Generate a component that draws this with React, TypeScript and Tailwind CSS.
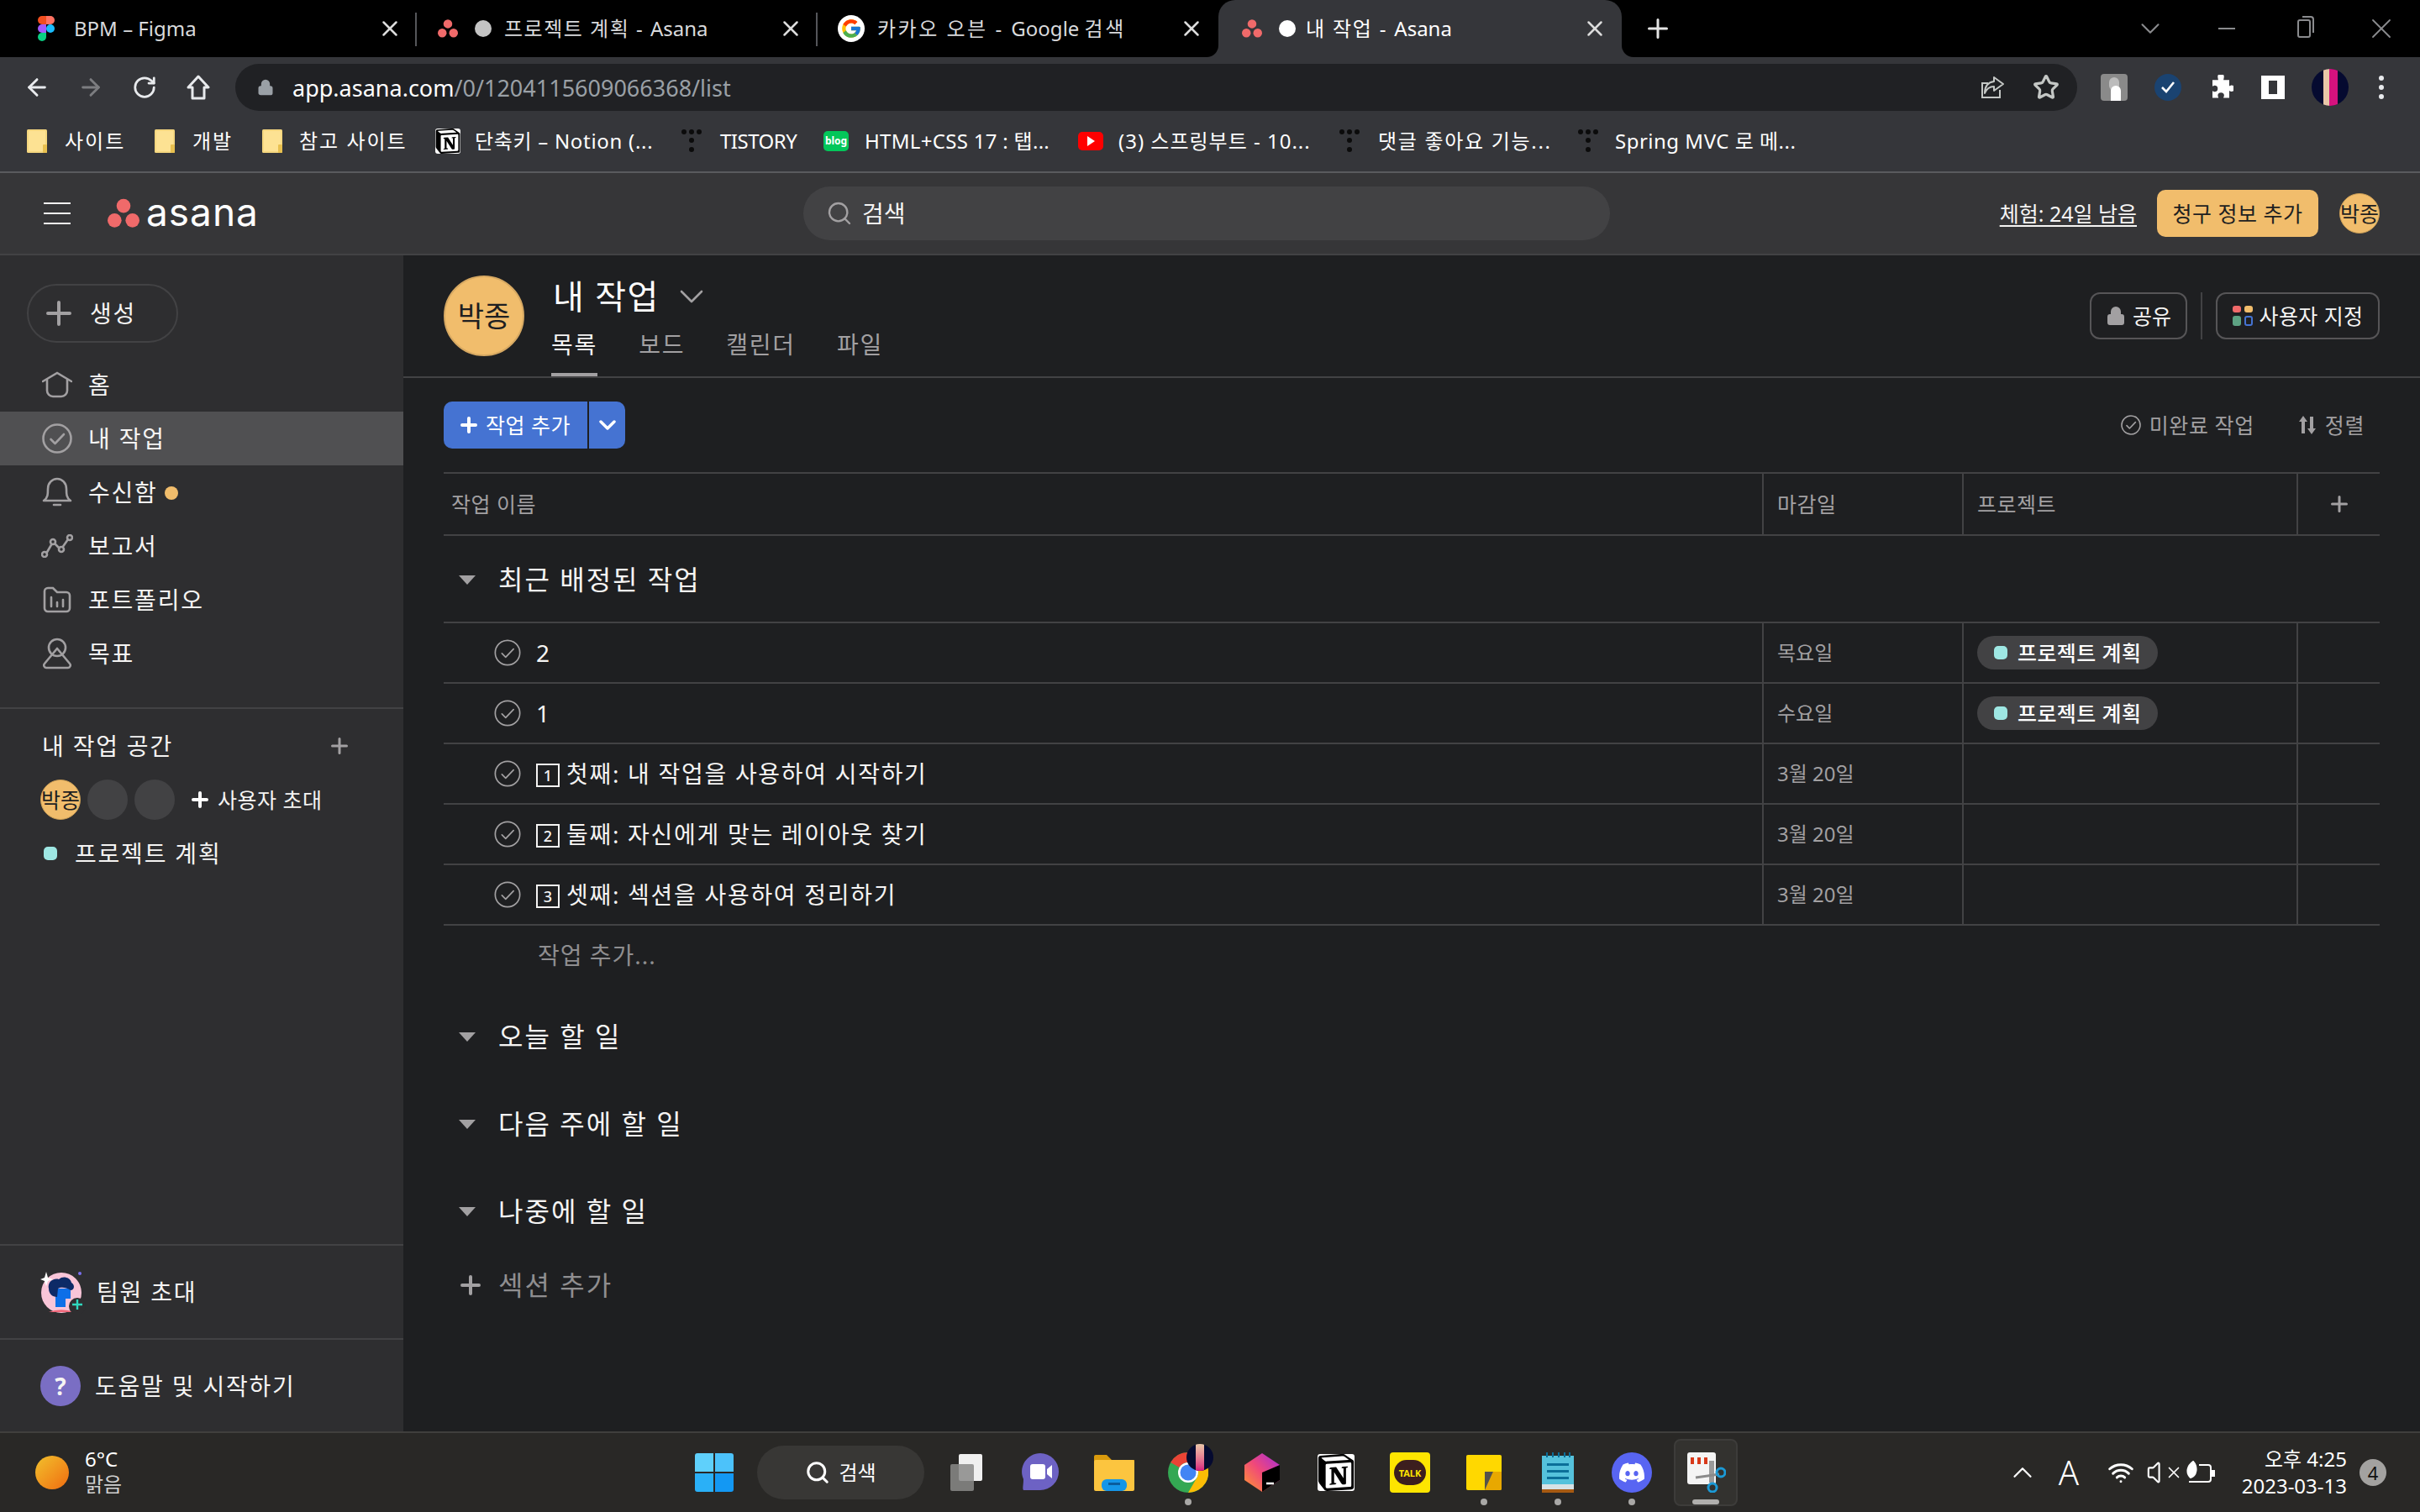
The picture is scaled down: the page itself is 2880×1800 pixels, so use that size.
import {
  ArrowLeft,
  ArrowRight,
  ChevronDown,
  ChevronUp,
  Lock,
  RotateCw,
  Search,
  Star,
  Volume,
  Wifi,
  X,
} from "lucide-react";
import { SiDiscord, SiNotion } from "react-icons/si";
import { FcGoogle } from "react-icons/fc";

const AsanaDots = ({ size = 24 }: { size?: number }) => (
  <svg width={size} height={size} viewBox="0 0 32 32">
    <circle cx="16" cy="8.5" r="7" fill="#f06a6a" />
    <circle cx="7" cy="23" r="7" fill="#f06a6a" />
    <circle cx="25" cy="23" r="7" fill="#f06a6a" />
  </svg>
);

// lucide's plus stops short of the box, this one fills it
const Cross = ({ size, stroke, color, className }: { size: number; stroke: number; color: string; className?: string }) => (
  <svg width={size} height={size} viewBox={`0 0 ${size} ${size}`} stroke={color} strokeWidth={stroke} strokeLinecap="round" className={`shrink-0 ${className ?? ""}`}>
    <path d={`M${size / 2} ${stroke / 2} V${size - stroke / 2} M${stroke / 2} ${size / 2} H${size - stroke / 2}`} />
  </svg>
);

const FigmaIcon = () => (
  <svg width="22" height="30" viewBox="0 0 22 33">
    <path d="M11 0H5.5a5.5 5.5 0 0 0 0 11H11z" fill="#f24e1e" />
    <path d="M11 0h5.5a5.5 5.5 0 0 1 0 11H11z" fill="#ff7262" />
    <path d="M11 11H5.5a5.5 5.5 0 0 0 0 11H11z" fill="#a259ff" />
    <circle cx="16.5" cy="16.5" r="5.5" fill="#1abcfe" />
    <path d="M11 22H5.5a5.5 5.5 0 1 0 5.5 5.5z" fill="#0acf83" />
  </svg>
);

const FolderIcon = () => (
  <svg width="24" height="28" viewBox="0 0 24 28">
    <rect x="0" y="0" width="24" height="28" rx="1.5" fill="#f5d77f" />
    <rect x="2" y="2" width="20" height="24" fill="#fde293" />
    <rect x="19" y="18" width="5" height="10" rx="1" fill="#e8c04f" />
  </svg>
);

const TistoryDots = () => (
  <svg width="24" height="28" viewBox="0 0 24 28" fill="#0b0b0b">
    <circle cx="3" cy="3" r="3" />
    <circle cx="12" cy="3" r="3" />
    <circle cx="21" cy="3" r="3" />
    <circle cx="12" cy="13" r="3" />
    <circle cx="12" cy="24" r="3" />
  </svg>
);

const NotionTile = ({ size }: { size: number }) => (
  <div className="flex items-center justify-center rounded-[3px] bg-white" style={{ width: size, height: size }}>
    <SiNotion size={size} color="#000000" />
  </div>
);

const Tab = ({
  width,
  icon,
  children,
  active,
  divider,
}: {
  width: string;
  icon: React.ReactNode;
  children: React.ReactNode;
  active?: boolean;
  divider?: boolean;
}) => (
  <div className={`${width} relative flex h-[68px] shrink-0 items-center ${active ? "rounded-t-[20px] bg-[#35363a]" : ""}`}>
    {active && (
      <>
        <div className="absolute -left-[14px] bottom-0 h-[14px] w-[14px] overflow-hidden">
          <div className="h-[14px] w-[14px] rounded-br-[14px] shadow-[6px_6px_0_6px_#35363a]" />
        </div>
        <div className="absolute -right-[14px] bottom-0 h-[14px] w-[14px] overflow-hidden">
          <div className="h-[14px] w-[14px] rounded-bl-[14px] shadow-[-6px_6px_0_6px_#35363a]" />
        </div>
      </>
    )}
    {icon}
    <span className={`whitespace-pre text-[24px] leading-none ${active ? "text-white" : "text-[#d9dadc]"}`}>{children}</span>
    <X size={30} strokeWidth={2} className="absolute right-[17px] top-[19px] text-[#dcdcdc]" />
    {divider && <div className="absolute right-0 top-[15px] h-[40px] w-[2px] bg-[#55565a]" />}
  </div>
);

const TabStrip = () => (
  <div className="flex h-[68px] shrink-0 items-center bg-black">
    <Tab
      width="w-[496px]"
      divider
      icon={
        <div className="ml-[44px] mr-[22px]">
          <FigmaIcon />
        </div>
      }
    >
      BPM – Figma
    </Tab>
    <Tab
      width="w-[477px]"
      divider
      icon={
        <div className="ml-[25px] mr-[15px] flex items-center gap-[20px]">
          <AsanaDots />
          <span className="h-[20px] w-[20px] rounded-full bg-[#c4c4c4]" />
        </div>
      }
    >
      <span className="tracking-[1.5px]">{"프로젝트 계획 - "}</span>Asana
    </Tab>
    <Tab
      width="w-[477px]"
      icon={
        <div className="ml-[24px] mr-[15px] flex h-[32px] w-[32px] items-center justify-center rounded-full bg-white">
          <FcGoogle size={26} />
        </div>
      }
    >
      <span className="tracking-[2.5px]">{"카카오 오븐 - "}</span>Google <span className="tracking-[2.5px]">검색</span>
    </Tab>
    <Tab
      width="w-[480px]"
      active
      icon={
        <div className="ml-[28px] mr-[12px] flex items-center gap-[20px]">
          <AsanaDots />
          <span className="h-[20px] w-[20px] rounded-full bg-white" />
        </div>
      }
    >
      <span className="tracking-[1.8px]">{"내 작업 - "}</span>Asana
    </Tab>
    <Cross size={24} stroke={3} color="#e4e4e4" className="ml-[31px]" />
    <div className="ml-auto flex items-center text-[#8a8b8e]">
      <ChevronDown size={38} strokeWidth={1.3} className="mr-[62px]" />
      <div className="mr-[74px] h-[2px] w-[20px] bg-[#8a8b8e]" />
      <div className="relative mr-[64px] h-[22px] w-[16px] rounded-[3px] border-2 border-[#8a8b8e]">
        <div className="absolute -right-[6px] -top-[6px] h-[20px] w-[14px] rounded-tr-[4px] border-r-2 border-t-2 border-[#8a8b8e]" />
      </div>
      <X size={40} strokeWidth={1.1} className="mr-[26px]" />
    </div>
  </div>
);

const Toolbar = () => (
  <div className="flex h-[64px] shrink-0 items-end bg-[#35363a] pb-0">
    <div className="flex h-[56px] w-[280px] items-center">
      <ArrowLeft size={32} strokeWidth={2.2} className="ml-[28px] text-[#e8eaed]" />
      <ArrowRight size={32} strokeWidth={2.2} className="ml-[32px] text-[#7c7d80]" />
      <RotateCw size={30} strokeWidth={2.2} className="ml-[33px] text-[#e8eaed]" />
      <svg width="28" height="30" viewBox="0 0 28 30" className="ml-[35px]" fill="none" stroke="#e8eaed" strokeWidth="3">
        <path d="M14 2 L26 15 H21 V28 H7 V15 H2 Z" strokeLinejoin="round" />
      </svg>
    </div>
    <div className="flex h-[56px] w-[2192px] items-center rounded-full bg-[#202124]">
      <Lock size={20} fill="#9aa0a6" strokeWidth={2.4} className="ml-[26px] text-[#9aa0a6]" />
      <span className="ml-[22px] text-[27px] leading-none text-white">
        app.asana.com<span className="text-[#9aa0a6]">/0/1204115609066368/list</span>
      </span>
      <svg width="30" height="30" viewBox="0 0 30 30" fill="none" stroke="#c4c7c5" strokeWidth="2" className="ml-auto">
        <path d="M24 18 v9 H3 V10 h7" />
        <path d="M17 3 L28 11 L17 19 V14 C11 14 8 17 6 22 C6 14 10 9 17 8 Z" strokeLinejoin="round" />
      </svg>
      <Star size={32} strokeWidth={2.4} className="ml-[33px] mr-[21px] text-[#c4c7c5]" />
    </div>
    <div className="flex h-[56px] items-center">
      <div className="relative ml-[28px] h-[32px] w-[32px] rounded-[4px] bg-[#8a8a8a]">
        <div className="absolute left-[10px] top-[4px] h-[16px] w-[12px] rounded-full bg-[#bcbcbc]" />
        <div className="absolute bottom-0 left-[12px] h-[18px] w-[12px] rounded-t-[6px] bg-white" />
      </div>
      <div className="ml-[32px] flex h-[32px] w-[32px] items-center justify-center rounded-full bg-[#1a4371]">
        <svg width="18" height="16" viewBox="0 0 18 16" fill="none" stroke="white" strokeWidth="2.6">
          <path d="M2 8 L7 13 L16 2" />
        </svg>
      </div>
      <svg width="30" height="30" viewBox="0 0 24 24" fill="white" className="ml-[32px]">
        <path d="M9 2a3 3 0 0 1 6 0c0 1-.5 2-.5 3H20v5.5c1 0 1.4-.6 2-.6a3 3 0 0 1 0 6c-.6 0-1-.6-2-.6V22h-5.5c0-1 .6-1.4.6-2a3 3 0 0 0-6 0c0 .6.6 1 .6 2H4v-6.5c1 0 1.4.6 2 .6a3 3 0 0 0 0-6c-.6 0-1 .6-2 .6V5h5.5C9.500 4 9 3 9 2z" />
      </svg>
      <div className="ml-[33px] flex h-[28px] w-[28px] justify-center bg-white">
        <div className="mt-[6px] h-[16px] w-[10px] bg-[#35363a]" />
      </div>
      <div className="relative ml-[32px] flex h-[44px] w-[44px] justify-center overflow-hidden rounded-full bg-[#050a30]">
        <div className="h-[44px] w-[7px] bg-[#e9c7a8]" />
        <div className="h-[44px] w-[10px] bg-[#d6127e]" />
      </div>
      <div className="ml-[36px] flex flex-col gap-[5px]">
        <span className="h-[6px] w-[6px] rounded-full bg-[#e8eaed]" />
        <span className="h-[6px] w-[6px] rounded-full bg-[#e8eaed]" />
        <span className="h-[6px] w-[6px] rounded-full bg-[#e8eaed]" />
      </div>
    </div>
  </div>
);

const Bookmark = ({ icon, label, className, text }: { icon: React.ReactNode; label: string; className: string; text: string }) => (
  <div className={`flex shrink-0 items-center ${className}`}>
    {icon}
    <span className={`whitespace-nowrap text-[24px] leading-none text-white ${text}`}>{label}</span>
  </div>
);

const Bookmarks = () => (
  <div className="flex h-[74px] shrink-0 items-center border-b-2 border-[#5a5b5e] bg-[#35363a] pl-[32px]">
    <Bookmark icon={<FolderIcon />} label="사이트" className="w-[152px] gap-[21px]" text="tracking-[2px]" />
    <Bookmark icon={<FolderIcon />} label="개발" className="w-[128px] gap-[21px]" text="tracking-[2px]" />
    <Bookmark icon={<FolderIcon />} label="참고 사이트" className="w-[206px] gap-[20px]" text="tracking-[2px]" />
    <Bookmark icon={<NotionTile size={30} />} label="단축키 – Notion (..." className="w-[293px] gap-[17px]" text="tracking-[0.7px]" />
    <Bookmark icon={<TistoryDots />} label="TISTORY" className="w-[169px] gap-[22px]" text="tracking-[-0.5px]" />
    <Bookmark
      icon={
        <div className="flex h-[24px] w-[30px] items-center justify-center rounded-[5px] bg-[#03c75a] text-[12px] font-bold leading-none text-white">
          blog
        </div>
      }
      label="HTML+CSS 17 : 탭..."
      className="w-[303px] gap-[19px]"
      text="tracking-[0.3px]"
    />
    <Bookmark
      icon={
        <div className="flex h-[22px] w-[30px] items-center justify-center rounded-[5px] bg-[#f00]">
          <div className="h-0 w-0 border-y-[6px] border-l-[9px] border-y-transparent border-l-white" />
        </div>
      }
      label="(3) 스프링부트 - 10..."
      className="w-[311px] gap-[18px]"
      text="tracking-[1px]"
    />
    <Bookmark icon={<TistoryDots />} label="댓글 좋아요 기능..." className="w-[284px] gap-[22px]" text="tracking-[1.7px]" />
    <Bookmark icon={<TistoryDots />} label="Spring MVC 로 메..." className="gap-[20px]" text="tracking-[0.5px]" />
  </div>
);

const TopBar = () => (
  <div className="flex h-[98px] shrink-0 items-center border-b-2 border-[#424244] bg-[#363638]">
    <div className="ml-[52px] flex w-[32px] flex-col gap-[10px]">
      <div className="h-[2px] bg-[#f5f4f3]" />
      <div className="h-[2px] bg-[#f5f4f3]" />
      <div className="h-[2px] bg-[#f5f4f3]" />
    </div>
    <div className="ml-[44px]">
      <AsanaDots size={38} />
    </div>
    <span className="-mt-[4px] ml-[8px] w-[131px] font-['Inter',sans-serif] text-[46px] leading-none tracking-[1px] text-white">asana</span>
    <div className="ml-[651px] flex h-[64px] w-[960px] items-center rounded-full bg-[#424244]">
      <Search size={32} strokeWidth={1.8} className="ml-[27px] text-[#a2a0a2]" />
      <span className="ml-[11px] text-[28px] leading-none text-[#f5f4f3]">검색</span>
    </div>
    <span className="ml-auto text-[25px] leading-none text-[#f5f4f3] underline underline-offset-4">체험: 24일 남음</span>
    <div className="ml-[24px] flex h-[56px] w-[192px] items-center justify-center rounded-[10px] bg-[#f1bd6c] text-[25px] leading-none tracking-[0.5px] text-[#1e1f21]">
      청구 정보 추가
    </div>
    <div className="ml-[25px] mr-[48px] flex h-[48px] w-[48px] items-center justify-center whitespace-nowrap rounded-full border border-[#c99d55] bg-[#f1bd6c] text-[25px] leading-none text-[#1e1f21]">
      박종
    </div>
  </div>
);

const HomeIcon = () => (
  <svg width="36" height="32" viewBox="0 0 36 32" fill="none" stroke="#a2a0a2" strokeWidth="2.6" strokeLinecap="round">
    <path d="M1 12 L18 2 L35 12" />
    <path d="M6 10 V23 a7 7 0 0 0 7 7 H23 a7 7 0 0 0 7 -7 V10" />
  </svg>
);

const CheckIcon = ({ size = 36, stroke = "#a2a0a2", width = 2.6 }: { size?: number; stroke?: string; width?: number }) => (
  <svg width={size} height={size} viewBox="0 0 36 36" fill="none" stroke={stroke} strokeWidth={width} className="shrink-0">
    <circle cx="18" cy="18" r="16.500" />
    <path d="M10.500 19 L15.500 24 L26 13" strokeLinecap="round" strokeLinejoin="round" />
  </svg>
);

const BellIcon = () => (
  <svg width="36" height="36" viewBox="0 0 36 36" fill="none" stroke="#a2a0a2" strokeWidth="2.6" strokeLinecap="round" strokeLinejoin="round">
    <path d="M2 28 C7 25 7 20 7 14 C7 7 12 2 18 2 C24 2 29 7 29 14 C29 20 29 25 34 28 Z" />
    <path d="M14 33 H22" />
  </svg>
);

const ReportIcon = () => (
  <svg width="38" height="28" viewBox="0 0 38 28" fill="none" stroke="#a2a0a2" strokeWidth="2.6">
    <path d="M6 23 L13 11 M16 11 L22 17 M25 16 L32 6" />
    <circle cx="4" cy="24" r="3" />
    <circle cx="14" cy="9" r="3" />
    <circle cx="24" cy="18" r="3" />
    <circle cx="34" cy="4" r="3" />
  </svg>
);

const PortfolioIcon = () => (
  <svg width="34" height="32" viewBox="0 0 34 32" fill="none" stroke="#a2a0a2" strokeWidth="2.6">
    <path d="M2 6 a4 4 0 0 1 4 -4 H12 L17 7 H28 a4 4 0 0 1 4 4 V26 a4 4 0 0 1 -4 4 H6 a4 4 0 0 1 -4 -4 Z" />
    <path d="M10 13 V24 M17 19 V24 M24 16 V24" strokeLinecap="round" />
  </svg>
);

const GoalIcon = () => (
  <svg width="34" height="38" viewBox="0 0 34 38" fill="none" stroke="#a2a0a2" strokeWidth="2.6">
    <circle cx="17" cy="12" r="10" />
    <path d="M17 13 L32 31 a3 3 0 0 1 -2 5 H4 a3 3 0 0 1 -2 -5 Z" strokeLinejoin="round" />
  </svg>
);

const navItems = [
  { label: "홈", icon: <HomeIcon /> },
  { label: "내 작업", icon: <CheckIcon />, active: true },
  { label: "수신함", icon: <BellIcon />, dot: true },
  { label: "보고서", icon: <ReportIcon /> },
  { label: "포트폴리오", icon: <PortfolioIcon /> },
  { label: "목표", icon: <GoalIcon /> },
];

const InviteAvatar = () => (
  <svg width="54" height="52" viewBox="0 0 54 52">
    <circle cx="25" cy="27" r="24" fill="#f9c5d8" />
    <path d="M10 50 a24 12 0 0 1 30 0 Z" fill="#f0687a" />
    <path d="M18 22 H36 V34 H30 V44 H18 Z" fill="#0d6fe8" />
    <path d="M10 22 C8 14 16 9 22 11 C27 6 36 9 37 15 C42 18 40 24 36 24 C30 20 24 20 21 22 L20 32 C14 32 10 28 10 22 Z" fill="#0d2a66" />
    <circle cx="44" cy="43" r="10" fill="#2e2e30" />
    <path d="M38 41 H50 M44 35 V47" stroke="#2fd8bd" strokeWidth="2.4" />
    <path d="M7 2 L9 9 L15 11 L9 13 L7 19 L5 13 L0 11 L5 9 Z" fill="#ffffff" />
    <circle cx="47" cy="4" r="2" fill="#7a6ff0" />
  </svg>
);

const Sidebar = () => (
  <aside className="flex w-[480px] shrink-0 flex-col bg-[#2e2e30]">
    <div className="ml-[32px] mt-[34px] flex h-[70px] w-[180px] items-center rounded-full border-2 border-[#424244]">
      <Cross size={30} stroke={4} color="#a2a0a2" className="ml-[21px]" />
      <span className="ml-[22px] text-[28px] leading-none tracking-[1.8px] text-[#f5f4f3]">생성</span>
    </div>
    <div className="mt-[18px] flex flex-col">
      {navItems.map((item) => (
        <div key={item.label} className={`flex h-[64px] items-center ${item.active ? "bg-[#505052]" : ""}`}>
          <div className="ml-[48px] flex w-[40px] justify-center">{item.icon}</div>
          <span className="ml-[17px] text-[28px] leading-none tracking-[1.8px] text-[#f5f4f3]">{item.label}</span>
          {item.dot && <span className="ml-[8px] mt-[2px] h-[16px] w-[16px] rounded-full bg-[#f1bd6c]" />}
        </div>
      ))}
    </div>
    <div className="mt-[32px] h-[2px] bg-[#424244]" />
    <div className="mt-[28px] flex h-[32px] items-center pl-[50px]">
      <span className="text-[28px] leading-none tracking-[1.8px] text-[#f5f4f3]">내 작업 공간</span>
      <Cross size={20} stroke={3} color="#a2a0a2" className="ml-auto mr-[66px]" />
    </div>
    <div className="mt-[24px] flex h-[48px] items-center pl-[48px]">
      <div className="flex h-[48px] w-[48px] items-center justify-center whitespace-nowrap rounded-full border border-[#c99d55] bg-[#f1bd6c] text-[25px] leading-none text-[#1e1f21]">
        박종
      </div>
      <div className="ml-[8px] h-[48px] w-[48px] rounded-full bg-[#424244]" />
      <div className="ml-[8px] h-[48px] w-[48px] rounded-full bg-[#424244]" />
      <Cross size={20} stroke={4} color="#ffffff" className="ml-[20px]" />
      <span className="ml-[11px] text-[25px] leading-none tracking-[0.5px] text-[#f5f4f3]">사용자 초대</span>
    </div>
    <div className="mt-[16px] flex h-[48px] items-center pl-[52px]">
      <span className="h-[16px] w-[16px] rounded-[5px] bg-[#9ee7e3]" />
      <span className="ml-[21px] text-[28px] leading-none tracking-[1.8px] text-[#f5f4f3]">프로젝트 계획</span>
    </div>
    <div className="mt-auto flex h-[112px] items-center border-t-2 border-[#424244] pl-[48px]">
      <InviteAvatar />
      <span className="ml-[13px] text-[28px] leading-none tracking-[1.8px] text-[#f5f4f3]">팀원 초대</span>
    </div>
    <div className="flex h-[111px] items-center border-t-2 border-[#424244] pl-[48px]">
      <div className="flex h-[48px] w-[48px] items-center justify-center rounded-full bg-[#7a6ec4] text-[28px] font-bold leading-none text-[#f5f4f3]">
        ?
      </div>
      <span className="ml-[17px] text-[28px] leading-none tracking-[1.8px] text-[#f5f4f3]">도움말 및 시작하기</span>
    </div>
  </aside>
);

const Caret = () => (
  <div className="ml-[18px] h-0 w-0 border-x-[10px] border-t-[11px] border-x-transparent border-t-[#a2a0a2]" />
);

const SectionHead = ({ title, height }: { title: string; height: string }) => (
  <div className={`flex ${height} items-center`}>
    <Caret />
    <span className="ml-[27px] text-[32px] leading-none tracking-[2px] text-[#f5f4f3]">{title}</span>
  </div>
);

const ProjectPill = () => (
  <div className="ml-[16px] flex h-[40px] w-[215px] items-center rounded-full bg-[#424244]">
    <span className="ml-[20px] h-[16px] w-[16px] rounded-[5px] bg-[#9ee7e3]" />
    <span className="ml-[12px] text-[25px] font-medium leading-none tracking-[0.4px] text-white">프로젝트 계획</span>
  </div>
);

const tasks = [
  { title: "2", due: "목요일", project: true },
  { title: "1", due: "수요일", project: true },
  { num: "1", title: "첫째: 내 작업을 사용하여 시작하기", due: "3월 20일" },
  { num: "2", title: "둘째: 자신에게 맞는 레이아웃 찾기", due: "3월 20일" },
  { num: "3", title: "셋째: 섹션을 사용하여 정리하기", due: "3월 20일" },
];

const TaskTable = () => (
  <div className="mx-[48px]">
    <div className="mt-[28px] grid h-[76px] grid-cols-[1569px_238px_398px_99px] border-y-2 border-[#424244] text-[25px] leading-none tracking-[0.5px] text-[#a2a0a2]">
      <div className="flex items-center pl-[9px]">작업 이름</div>
      <div className="flex items-center border-l-2 border-[#424244] pl-[16px]">마감일</div>
      <div className="flex items-center border-l-2 border-[#424244] pl-[16px]">프로젝트</div>
      <div className="flex items-center justify-center border-l-2 border-[#424244]">
        <Cross size={20} stroke={3} color="#a2a0a2" />
      </div>
    </div>
    <SectionHead title="최근 배정된 작업" height="h-[102px] pt-[2px]" />
    <div className="border-t-2 border-[#424244]">
      {tasks.map((task) => (
        <div key={task.title} className="grid h-[72px] grid-cols-[1569px_238px_398px_99px] border-b-2 border-[#424244]">
          <div className="flex items-center pl-[60px]">
            <CheckIcon size={32} width={1.9} />
            <div className="ml-[18px] flex items-center text-[28px] leading-none tracking-[1.7px] text-[#f5f4f3]">
              {task.num && (
                <span className="mr-[8px] mt-[4px] flex h-[28px] w-[28px] items-center justify-center border-2 border-[#f5f4f3] text-[18px] font-medium leading-none tracking-normal">
                  {task.num}
                </span>
              )}
              {task.title}
            </div>
          </div>
          <div className="flex items-center border-l-2 border-[#424244] pl-[16px] text-[24px] leading-none text-[#a2a0a2]">
            {task.due}
          </div>
          <div className="flex items-center border-l-2 border-[#424244]">{task.project && <ProjectPill />}</div>
          <div className="border-l-2 border-[#424244]" />
        </div>
      ))}
    </div>
    <div className="flex h-[70px] items-center pl-[112px] text-[28px] leading-none tracking-[1px] text-[#8f8e90]">작업 추가...</div>
    <div className="mt-[10px]">
      <SectionHead title="오늘 할 일" height="h-[104px]" />
      <SectionHead title="다음 주에 할 일" height="h-[104px]" />
      <SectionHead title="나중에 할 일" height="h-[104px]" />
    </div>
    <div className="flex h-[72px] items-center">
      <Cross size={24} stroke={4} color="#a2a0a2" className="ml-[20px]" />
      <span className="ml-[21px] text-[32px] leading-none tracking-[2px] text-[#8f8e90]">섹션 추가</span>
    </div>
  </div>
);

const tabs = [
  { label: "목록", active: true },
  { label: "보드" },
  { label: "캘린더" },
  { label: "파일" },
];

const MainHeader = () => (
  <div className="flex h-[146px] shrink-0 items-start border-b-2 border-[#424244] pl-[48px] pr-[48px]">
    <div className="mt-[24px] flex h-[96px] w-[96px] items-center justify-center rounded-full border-2 border-[#d6a862] bg-[#f1bd6c] text-[34px] leading-none text-[#1e1f21]">
      박종
    </div>
    <div className="ml-[32px] mt-[24px]">
      <div className="flex h-[50px] items-center pl-[2px]">
        <span className="text-[40px] leading-none tracking-[1.5px] text-white">내 작업</span>
        <ChevronDown size={48} strokeWidth={1.3} className="ml-[14px] text-[#a2a0a2]" />
      </div>
      <div className="flex gap-[49px]">
        {tabs.map((tab) => (
          <div
            key={tab.label}
            className={`h-[70px] pt-[16px] text-[28px] leading-[32px] tracking-[1.8px] ${
              tab.active ? "border-b-4 border-[#a2a0a2] text-[#f5f4f3]" : "text-[#a2a0a2]"
            }`}
          >
            {tab.label}
          </div>
        ))}
      </div>
    </div>
    <div className="ml-auto mt-[44px] flex h-[56px] items-center">
      <div className="flex h-[56px] w-[116px] items-center justify-center gap-[8px] rounded-[12px] border-2 border-[#565557] text-[25px] leading-none text-[#f5f4f3]">
        <Lock size={24} fill="#a2a0a2" className="text-[#a2a0a2]" />
        공유
      </div>
      <div className="mx-[16px] h-[56px] w-[2px] bg-[#424244]" />
      <div className="flex h-[56px] w-[195px] items-center justify-center gap-[8px] rounded-[12px] border-2 border-[#565557] text-[25px] leading-none tracking-[0.4px] text-[#f5f4f3]">
        <div className="grid h-[24px] w-[24px] grid-cols-2 gap-[4px]">
          <span className="rounded-[3px] bg-[#f06a6a]" />
          <span className="rounded-[3px] bg-[#f1bd6c]" />
          <span className="rounded-[3px] bg-[#5da283]" />
          <span className="rounded-[3px] border-2 border-[#4573d2]" />
        </div>
        사용자 지정
      </div>
    </div>
  </div>
);

const ActionRow = () => (
  <div className="mt-[28px] flex h-[56px] items-center pl-[48px] pr-[66px]">
    <div className="flex h-[56px] w-[171px] items-center rounded-l-[10px] bg-[#4573d2]">
      <Cross size={20} stroke={4} color="#ffffff" className="ml-[20px]" />
      <span className="ml-[10px] text-[25px] leading-none tracking-[0.5px] text-white">작업 추가</span>
    </div>
    <div className="ml-[2px] flex h-[56px] w-[43px] items-center justify-center rounded-r-[10px] bg-[#4573d2]">
      <ChevronDown size={32} strokeWidth={2.6} className="text-white" />
    </div>
    <div className="ml-auto flex items-center text-[25px] leading-none text-[#a2a0a2]">
      <CheckIcon size={24} width={2.4} />
      <span className="ml-[10px] tracking-[0.6px]">미완료 작업</span>
      <svg width="22" height="24" viewBox="0 0 22 24" fill="#a2a0a2" className="ml-[52px]">
        <path d="M6 1 L11 8 H8 V22 H4 V8 H1 Z" />
        <path d="M16 23 L21 16 H18 V2 H14 V16 H11 Z" />
      </svg>
      <span className="ml-[10px] tracking-[0.6px]">정렬</span>
    </div>
  </div>
);

const TaskbarIcon = ({ children, dot, active }: { children: React.ReactNode; dot?: boolean; active?: boolean }) => (
  <div className="relative flex h-[80px] w-[88px] items-center justify-center">
    {active && <div className="absolute inset-y-0 left-[6px] right-[6px] rounded-[8px] border-2 border-[#3d3c3a] bg-[#33322f]" />}
    <div className="relative flex items-center justify-center">{children}</div>
    {dot && <span className="absolute bottom-[1px] left-[40px] h-[8px] w-[8px] rounded-full bg-[#a9a8a6]" />}
    {active && <span className="absolute bottom-[2px] left-[28px] h-[6px] w-[32px] rounded-full bg-[#b0afad]" />}
  </div>
);

const Taskbar = () => (
  <div className="flex h-[96px] shrink-0 items-center border-t-2 border-[#403f3d] bg-[#292826]">
    <div className="flex w-[827px] items-center pl-[42px]">
      <div className="h-[40px] w-[40px] rounded-full bg-gradient-to-br from-[#f0c02c] to-[#ee6a0f]" />
      <div className="-mt-[2px] ml-[19px] flex flex-col gap-[4px]">
        <span className="text-[24px] leading-[26px] text-white">6°C</span>
        <span className="text-[24px] leading-[26px] text-[#d0d0cf]">맑음</span>
      </div>
    </div>
    <div className="grid h-[46px] w-[46px] grid-cols-2 gap-[2px]">
      <span className="rounded-tl-[3px] bg-[#5fd0fb]" />
      <span className="rounded-tr-[3px] bg-[#4cc2fa]" />
      <span className="rounded-bl-[3px] bg-[#2ab0f7]" />
      <span className="rounded-br-[3px] bg-[#1398f3]" />
    </div>
    <div className="ml-[28px] flex h-[64px] w-[199px] items-center justify-center gap-[10px] rounded-full bg-[#383735]">
      <Search size={30} strokeWidth={2.4} className="text-white" />
      <span className="text-[24px] leading-none text-white">검색</span>
    </div>
    <div className="ml-[6px] flex">
      <TaskbarIcon>
        <div className="relative h-[44px] w-[38px]">
          <div className="absolute right-0 top-0 h-[32px] w-[28px] rounded-[2px] bg-[#f0f0f0]" />
          <div className="absolute bottom-0 left-0 h-[32px] w-[28px] rounded-[2px] bg-[#8a8988]/85" />
        </div>
      </TaskbarIcon>
      <TaskbarIcon>
        <svg width="46" height="48" viewBox="0 0 46 48">
          <path d="M23 1 a22 22 0 0 1 0 44 H4 C1 45 3 40 3 32 A22 22 0 0 1 23 1 Z" fill="#6d62c4" />
          <rect x="11" y="14" width="18" height="18" rx="3" fill="#fff" />
          <path d="M31 20 L37 15 V31 L31 26 Z" fill="#fff" />
        </svg>
      </TaskbarIcon>
      <TaskbarIcon>
        <svg width="48" height="44" viewBox="0 0 48 44">
          <path d="M0 3 a2 2 0 0 1 2 -2 H15 L21 7 H48 V12 H0 Z" fill="#d99a0c" />
          <rect x="0" y="7" width="48" height="37" rx="2" fill="#fcc53f" />
          <rect x="9" y="30" width="30" height="14" rx="6" fill="#1596e8" />
          <rect x="17" y="34" width="14" height="3" fill="#0a5d9e" />
        </svg>
      </TaskbarIcon>
      <TaskbarIcon dot>
        <svg width="48" height="48" viewBox="0 0 48 48">
          <circle cx="24" cy="24" r="24" fill="#34a853" />
          <path d="M24 0 A24 24 0 0 1 45 12 H24 A12 12 0 0 0 13.500 18 L3.200 12 A24 24 0 0 1 24 0 Z" fill="#ea4335" />
          <path d="M45 12 A24 24 0 0 1 24 48 L34.500 30 A12 12 0 0 0 34.500 18 Z" fill="#fbbc05" />
          <circle cx="24" cy="24" r="12" fill="#fff" />
          <circle cx="24" cy="24" r="9.500" fill="#4285f4" />
        </svg>
        <div className="absolute -right-[6px] -top-[10px] flex h-[32px] w-[32px] justify-center overflow-hidden rounded-full bg-[#050a30]">
          <div className="h-[32px] w-[10px] bg-gradient-to-b from-[#e9c7a8] to-[#d6127e]" />
        </div>
      </TaskbarIcon>
      <TaskbarIcon>
        <svg width="42" height="46" viewBox="0 0 42 46">
          <defs>
            <linearGradient id="jb" x1="0" y1="1" x2="1" y2="0">
              <stop offset="0" stopColor="#ff9a2e" />
              <stop offset="0.5" stopColor="#f0487a" />
              <stop offset="1" stopColor="#a32cdc" />
            </linearGradient>
          </defs>
          <path d="M21 0 L42 14 V32 L21 46 L0 32 V14 Z" fill="url(#jb)" />
          <path d="M21 23 L42 14 V32 L21 46 Z" fill="#000" />
          <path d="M26 36 H35" stroke="#fff" strokeWidth="2.5" />
        </svg>
      </TaskbarIcon>
      <TaskbarIcon>
        <NotionTile size={44} />
      </TaskbarIcon>
      <TaskbarIcon>
        <div className="flex h-[48px] w-[48px] items-center justify-center rounded-[4px] bg-[#fee500]">
          <div className="flex h-[30px] w-[38px] items-center justify-center rounded-full bg-[#3c1e1e] text-[11px] font-bold leading-none text-[#fee500]">
            TALK
          </div>
        </div>
      </TaskbarIcon>
      <TaskbarIcon dot>
        <svg width="42" height="42" viewBox="0 0 42 42">
          <rect width="42" height="42" rx="2" fill="#ffd800" />
          <path d="M22 42 L32 20 H42 V40 A2 2 0 0 1 40 42 Z" fill="#e8a800" />
          <path d="M22 42 L32 20 H22 Z" fill="#55524a" />
        </svg>
      </TaskbarIcon>
      <TaskbarIcon dot>
        <svg width="38" height="48" viewBox="0 0 38 48">
          <rect y="4" width="38" height="44" fill="#55c2dc" />
          <rect y="38" width="38" height="6" fill="#d7e2e6" />
          <rect y="44" width="38" height="4" fill="#a65a12" />
          <rect x="6" y="13" width="26" height="3" fill="#0b6f99" />
          <rect x="6" y="21" width="26" height="3" fill="#0b6f99" />
          <rect x="6" y="29" width="26" height="3" fill="#0b6f99" />
          <path d="M6 0 V6 M13 0 V6 M20 0 V6 M27 0 V6 M33 0 V6" stroke="#0b6f99" strokeWidth="2" />
        </svg>
      </TaskbarIcon>
      <TaskbarIcon dot>
        <div className="flex h-[48px] w-[48px] items-center justify-center rounded-full bg-[#5865f2]">
          <SiDiscord size={30} color="#ffffff" />
        </div>
      </TaskbarIcon>
      <TaskbarIcon active>
        <svg width="48" height="48" viewBox="0 0 48 48">
          <rect x="2" y="0" width="34" height="38" rx="3" fill="#f4f4f4" />
          <path d="M8 6 V14 M16 6 V14 M24 6 V14" stroke="#d8391a" strokeWidth="4" />
          <rect x="28" y="10" width="6" height="26" fill="#9a9a9a" />
          <path d="M12 30 L40 26" stroke="#8a8a8a" strokeWidth="3" />
          <circle cx="42" cy="24" r="5" fill="none" stroke="#1b9ad6" strokeWidth="3" />
          <circle cx="32" cy="42" r="5" fill="none" stroke="#1b9ad6" strokeWidth="3" />
        </svg>
      </TaskbarIcon>
    </div>
    <div className="ml-auto flex items-center text-white">
      <ChevronUp size={38} strokeWidth={1.4} />
      <span className="ml-[24px] font-['Noto_Sans',sans-serif] text-[40px] font-light leading-none">A</span>
      <Wifi size={32} strokeWidth={2.2} className="ml-[34px]" />
      <div className="ml-[14px] flex items-center">
        <Volume size={34} strokeWidth={1.5} className="-mr-[12px]" />
        <X size={22} strokeWidth={1.8} className="-mr-[3px]" />
      </div>
      <svg width="34" height="28" viewBox="0 0 34 28" fill="none" stroke="white" strokeWidth="2" className="ml-[7px]">
        <path d="M3 25 H26 a3 3 0 0 0 3 -3 V8 a3 3 0 0 0 -3 -3 H15" />
        <path d="M30 12 H33 V18 H30" fill="white" />
        <path d="M8 1 C1 6 -1 14 5 20 C12 18 14 8 8 1 Z" fill="white" />
      </svg>
      <div className="ml-[29px] flex w-[128px] flex-col items-end gap-[6px] whitespace-nowrap text-[24px] leading-[26px]">
        <span>오후 4:25</span>
        <span>2023-03-13</span>
      </div>
      <div className="ml-[15px] mr-[40px] flex h-[32px] w-[32px] items-center justify-center rounded-full bg-[#a3a2a0] text-[22px] leading-none text-[#111]">
        4
      </div>
    </div>
  </div>
);

export default function App() {
  return (
    <div className="flex h-[1800px] w-[2880px] flex-col overflow-hidden bg-[#1e1f21] font-['Noto_Sans','Noto_Sans_CJK_KR',sans-serif] text-white">
      <TabStrip />
      <Toolbar />
      <Bookmarks />
      <TopBar />
      <div className="flex min-h-0 flex-1">
        <Sidebar />
        <main className="min-w-0 flex-1">
          <MainHeader />
          <ActionRow />
          <TaskTable />
        </main>
      </div>
      <Taskbar />
    </div>
  );
}
